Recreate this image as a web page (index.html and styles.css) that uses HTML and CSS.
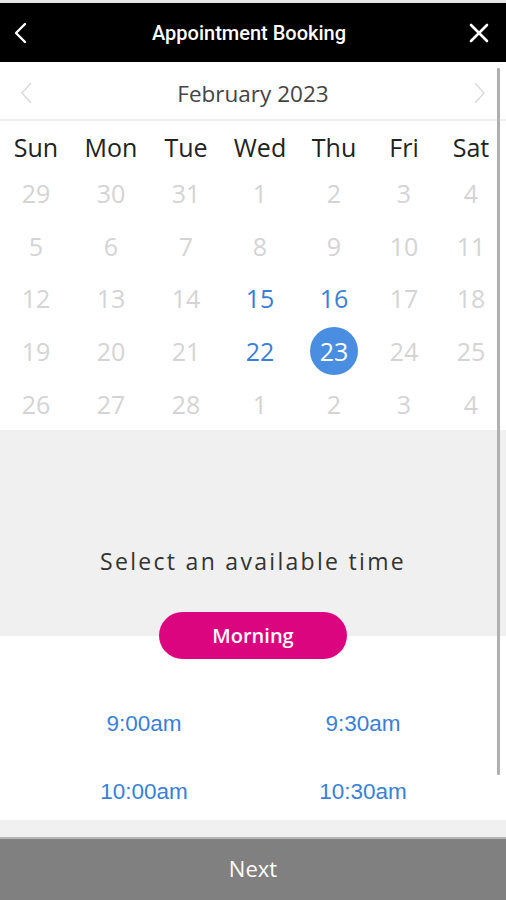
FILE: index.html
```html
<!DOCTYPE html>
<html lang="en">
<head>
<meta charset="utf-8">
<title>Appointment Booking</title>
<link rel="stylesheet" href="styles.css">
</head>
<body>
<div class="app">
  <header class="topbar">
    <svg class="tb-icon" width="18" height="22" viewBox="0 0 18 22"><path d="M13 2 L4 11 L13 20" fill="none" stroke="#fff" stroke-width="2.4" stroke-linecap="round" stroke-linejoin="round"/></svg>
    <h1 class="title">Appointment Booking</h1>
    <svg class="tb-icon" width="22" height="22" viewBox="0 0 22 22"><path d="M3 3 L19 19 M19 3 L3 19" fill="none" stroke="#fff" stroke-width="2.6" stroke-linecap="round"/></svg>
  </header>

  <main class="content">
    <section class="calendar">
      <div class="month-row">
        <svg width="14" height="24" viewBox="0 0 14 24"><path d="M12 2 L3 12 L12 22" fill="none" stroke="#dcdcdc" stroke-width="1.6"/></svg>
        <span class="month">February 2023</span>
        <svg width="14" height="24" viewBox="0 0 14 24"><path d="M2 2 L11 12 L2 22" fill="none" stroke="#dcdcdc" stroke-width="1.6"/></svg>
      </div>
      <div class="grid">
        <span class="dname">Sun</span><span class="dname">Mon</span><span class="dname">Tue</span><span class="dname">Wed</span><span class="dname">Thu</span><span class="dname">Fri</span><span class="dname">Sat</span>
        <span class="day">29</span><span class="day">30</span><span class="day">31</span><span class="day">1</span><span class="day">2</span><span class="day">3</span><span class="day">4</span>
        <span class="day">5</span><span class="day">6</span><span class="day">7</span><span class="day">8</span><span class="day">9</span><span class="day">10</span><span class="day">11</span>
        <span class="day">12</span><span class="day">13</span><span class="day">14</span><span class="day avail">15</span><span class="day avail">16</span><span class="day">17</span><span class="day">18</span>
        <span class="day">19</span><span class="day">20</span><span class="day">21</span><span class="day avail">22</span><span class="day"><span class="selected">23</span></span><span class="day">24</span><span class="day">25</span>
        <span class="day">26</span><span class="day">27</span><span class="day">28</span><span class="day">1</span><span class="day">2</span><span class="day">3</span><span class="day">4</span>
      </div>
    </section>

    <section class="time-head">
      <p class="prompt">Select an available time</p>
    </section>
    <div class="pill-wrap"><button class="pill">Morning</button></div>

    <section class="slots">
      <span class="slot">9:00am</span><span class="slot">9:30am</span>
      <span class="slot">10:00am</span><span class="slot">10:30am</span>
    </section>
    <div class="strip"></div>
    <div class="scrollbar"></div>
  </main>

  <footer class="next">Next</footer>
</div>
</body>
</html>
```

FILE: styles.css
```css
* { box-sizing: border-box; }
html, body { margin: 0; padding: 0; background: #fff; }
body { font-family: "Open Sans", "Noto Sans", sans-serif; }
.app { width: 506px; height: 900px; display: flex; flex-direction: column; overflow: hidden; border-top: 3px solid #e6e6e6; }

.topbar { flex-shrink: 0; height: 59px; background: #000; display: flex; align-items: center; justify-content: space-between; padding: 0 16px 0 12px; }
.title { margin: 0; color: #fff; font-family: "Roboto", "Open Sans", sans-serif; font-weight: 500; font-size: 20px; }
.tb-icon { display: block; }

.content { position: relative; flex: 1; min-height: 0; display: flex; flex-direction: column; }
.content > * { flex-shrink: 0; }

.month-row { height: 59px; display: flex; align-items: center; justify-content: space-between; padding: 5px 19px 0 19px; border-bottom: 2px solid #f0f0f0; }
.month { font-size: 22.5px; color: #444; }

.grid { display: grid; grid-template-columns: 72px 78px 72px 76px 72px 68px 66px; grid-template-rows: 39.2px repeat(5, 52.75px); padding-top: 6.4px; height: 309px; }
.dname { display: flex; align-items: center; justify-content: center; font-size: 25px; color: #222; }
.day { display: flex; align-items: center; justify-content: center; font-size: 25px; color: #d4d4d4; }
.day.avail { color: #3a7fd5; }
.selected { width: 48px; height: 48px; border-radius: 50%; background: #4a8ee2; color: #fff; display: flex; align-items: center; justify-content: center; }

.time-head { background: #f0f0f0; height: 206px; display: flex; align-items: flex-end; justify-content: center; padding-bottom: 59px; }
.prompt { margin: 0; font-size: 23px; letter-spacing: 2.3px; color: #333; }

.pill-wrap { display: flex; justify-content: center; margin-top: -24px; }
.pill { width: 188px; height: 47px; border: none; border-radius: 24px; background: #dc0580; color: #fff; font-family: "Open Sans", sans-serif; font-weight: 600; font-size: 20px; padding: 0; }

.content > .slots { flex: 1 1 auto; min-height: 0; display: grid; grid-template-columns: 288px 150px; grid-auto-rows: 68px; align-content: start; padding-top: 31px; }
.slot { display: flex; align-items: center; justify-content: center; font-family: "Liberation Sans", Arial, sans-serif; font-size: 22.5px; color: #3a7fd5; }

.strip { height: 19px; background: #f0f0f0; border-bottom: 2px solid #b4b4b4; }

.content > .scrollbar { position: absolute; top: 6px; right: 6px; width: 3px; height: 707px; background: #b0b0b0; border-radius: 1px; }

.next { flex-shrink: 0; height: 61px; background: #808080; color: #fff; font-size: 22px; display: flex; align-items: center; justify-content: center; padding-bottom: 3px; }
```
